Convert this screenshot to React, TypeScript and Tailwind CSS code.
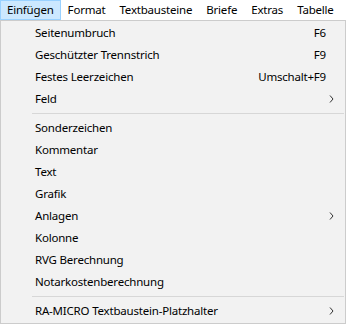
import React from 'react';

type Item =
  | { kind: 'item'; label: string; shortcut?: string; submenu?: boolean }
  | { kind: 'sep' };

const menuBar = ['Einfügen', 'Format', 'Textbausteine', 'Briefe', 'Extras', 'Tabelle', 'Fenster'];

const items: Item[] = [
  { kind: 'item', label: 'Seitenumbruch', shortcut: 'F6' },
  { kind: 'item', label: 'Geschützter Trennstrich', shortcut: 'F9' },
  { kind: 'item', label: 'Festes Leerzeichen', shortcut: 'Umschalt+F9' },
  { kind: 'item', label: 'Feld', submenu: true },
  { kind: 'sep' },
  { kind: 'item', label: 'Sonderzeichen' },
  { kind: 'item', label: 'Kommentar' },
  { kind: 'item', label: 'Text' },
  { kind: 'item', label: 'Grafik' },
  { kind: 'item', label: 'Anlagen', submenu: true },
  { kind: 'item', label: 'Kolonne' },
  { kind: 'item', label: 'RVG Berechnung' },
  { kind: 'item', label: 'Notarkostenberechnung' },
  { kind: 'sep' },
  { kind: 'item', label: 'RA-MICRO Textbaustein-Platzhalter', submenu: true },
];

// small windows-style submenu arrow
function Chevron() {
  return (
    <svg width="5" height="8" viewBox="0 0 5 8" className="text-[#333]">
      <path d="M1 0.5 L4 4 L1 7.5" fill="none" stroke="currentColor" strokeWidth="1" />
    </svg>
  );
}

export default function App() {
  return (
    <div className="w-[347px] h-[325px] overflow-hidden bg-white text-[11.5px] tracking-[-0.2px] text-black font-['Segoe_UI','Noto_Sans',sans-serif]">
      {/* Menu bar */}
      <div className="flex h-[20px] items-stretch whitespace-nowrap">
        {menuBar.map((m, i) => (
          <div
            key={m}
            className={
              i === 0
                ? 'flex items-center px-[6px] bg-[#cce8ff] border border-[#99d1ff]'
                : 'flex items-center px-[6px] border border-transparent'
            }
          >
            {m}
          </div>
        ))}
      </div>

      {/* Dropdown */}
      <div className="w-[346px] h-[304px] bg-[#f2f2f2] border border-[#cccccc] pt-[1px]">
        {items.map((it, i) =>
          it.kind === 'sep' ? (
            <div key={i} className="h-[7px] flex items-center pl-[31px] pr-[1px]">
              <div className="h-px w-full bg-[#d7d7d7]" />
            </div>
          ) : (
            <div key={i} className="flex h-[22px] items-center pl-[34px] pr-[11px]">
              <span className="flex-1">{it.label}</span>
              {it.shortcut && <span className="pr-[8px]">{it.shortcut}</span>}
              {it.submenu && <Chevron />}
            </div>
          )
        )}
      </div>
    </div>
  );
}
